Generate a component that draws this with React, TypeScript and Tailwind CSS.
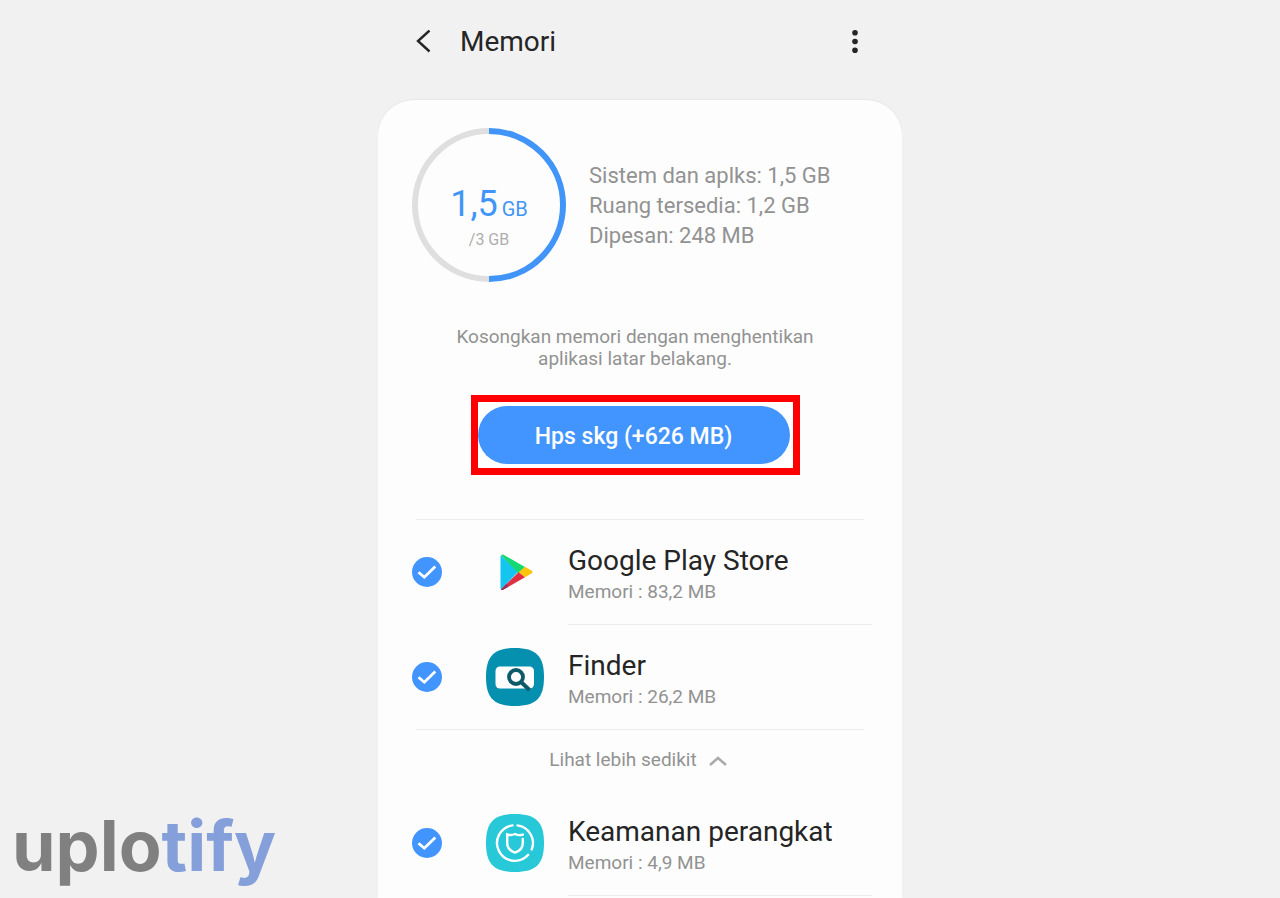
import { useState } from "react";
import type { ReactNode } from "react";

type AppInfo = {
  id: string;
  name: string;
  memory: string;
  icon: ReactNode;
};

const PlayStoreIcon = () => (
  <svg viewBox="0 0 58 58" className="size-full" aria-hidden="true">
    <path d="M15 12.5 L32 29 L15 46.5 Q14.5 46 14.5 45 V13.5 Q14.5 12.8 15 12.5Z" fill="#14c5f0" />
    <path d="M15 12.3 Q16.2 11 18 12 L39 24 L32.5 30.5Z" fill="#14d873" />
    <path d="M39 23.8 L45.5 27.6 Q47.6 29 45.5 30.4 L39 34.3 L32.5 29.2Z" fill="#fcc50e" />
    <path d="M32.5 29.2 L39 34.3 L18 46.3 Q16 47.5 15 46.4Z" fill="#e02f43" />
    <path d="M15 46.4 L20.5 40.5 L22.5 43.7 L18 46.3 Q16 47.5 15 46.4Z" fill="#9c3159" />
  </svg>
);

// rounded square shared by the Samsung app icons
const SQUIRCLE =
  "M29 0 C50 0 58 8 58 29 C58 50 50 58 29 58 C8 58 0 50 0 29 C0 8 8 0 29 0Z";

const FinderIcon = () => (
  <svg viewBox="0 0 58 58" className="size-full" aria-hidden="true">
    <path d={SQUIRCLE} fill="#0590b0" />
    <rect x="9.5" y="18.5" width="38.5" height="22" rx="4.5" fill="#fff" />
    <circle cx="30" cy="29" r="7" fill="none" stroke="#0d5b68" strokeWidth="3.8" />
    <path d="M35 34 L43.5 42" stroke="#0d5b68" strokeWidth="4" />
  </svg>
);

const SecurityIcon = () => (
  <svg viewBox="0 0 58 58" className="size-full" aria-hidden="true">
    <path d={SQUIRCLE} fill="#27c8d8" />
    <g fill="none" stroke="#fff" strokeWidth="2.4" strokeLinecap="round">
      <path d="M31.5 11.4 A17.8 17.8 0 0 1 45.7 35.5" />
      <path d="M42.2 40.8 A17.8 17.8 0 1 1 26.5 11.4" />
      <path d="M36.8 25 V29 Q36.8 36 29 38.6 Q21.2 36 21.2 29 V20.5 Q25 21.8 29 20 Q32.5 21.8 36.8 20.6" />
    </g>
  </svg>
);

const topApps: AppInfo[] = [
  { id: "play-store", name: "Google Play Store", memory: "83,2 MB", icon: <PlayStoreIcon /> },
  { id: "finder", name: "Finder", memory: "26,2 MB", icon: <FinderIcon /> },
];

const moreApps: AppInfo[] = [
  { id: "security", name: "Keamanan perangkat", memory: "4,9 MB", icon: <SecurityIcon /> },
];

const AppRow = ({ app, divider }: { app: AppInfo; divider?: boolean }) => (
  <li>
    <div className="flex h-[104px] items-center">
      <div className="relative mr-11 size-[30px] shrink-0">
        <input
          id={app.id}
          type="checkbox"
          defaultChecked
          className="peer block size-full appearance-none rounded-full border border-gray-300 checked:border-0 checked:bg-[#4295ff]"
        />
        <svg
          viewBox="0 0 30 30"
          className="pointer-events-none absolute inset-0 hidden peer-checked:block"
          fill="none"
          stroke="#fff"
          strokeWidth="2.8"
          aria-hidden="true"
        >
          <path d="M6.5 15.2 L12.3 20.2 L23.3 9.4" />
        </svg>
      </div>
      <span className="mr-6 size-[58px] shrink-0">{app.icon}</span>
      <label htmlFor={app.id} className="flex flex-1 flex-col pt-1">
        <span className="text-[28px] leading-9 text-[#252525]">{app.name}</span>
        <span className="text-[19px] leading-[26px] text-[#929292]">Memori : {app.memory}</span>
      </label>
    </div>
    {divider && <hr className="-mr-2 ml-[156px] border-[#ececec]" />}
  </li>
);

const MemoryRing = () => (
  <div className="relative size-[154px] shrink-0">
    <svg viewBox="0 0 154 154" className="size-full" fill="none" strokeWidth="6" aria-hidden="true">
      <path d="M77 151 A74 74 0 0 1 77 3" stroke="#dfdfdf" />
      <path d="M77 3 A74 74 0 0 1 77 151" stroke="#4295f8" />
    </svg>
    <div className="absolute inset-0 flex flex-col items-center justify-center pt-6">
      <p className="text-[36px] leading-10 text-[#4295f8]">
        1,5<span className="ml-1 text-[20px]">GB</span>
      </p>
      <p className="text-base leading-[22px] text-[#adadad]">/3 GB</p>
    </div>
  </div>
);

export default function App() {
  const [expanded, setExpanded] = useState(true);

  return (
    <div className="relative flex min-h-screen flex-col overflow-hidden bg-[#f1f1f1] font-[Roboto,sans-serif]">
      <div className="mx-auto flex w-full max-w-[524px] flex-1 flex-col">
        <header className="flex h-[100px] items-start px-9 pt-6">
          <button type="button" aria-label="Kembali" className="mr-7 flex h-9 w-[18px] items-center">
            <svg viewBox="0 0 18 24" className="h-6 w-[18px]" fill="none" stroke="#252525" strokeWidth="2.4">
              <path d="M15.5 0.5 L4 11 L15.5 21.5" />
            </svg>
          </button>
          <h1 className="flex-1 text-[28px] leading-9 text-[#252525]">Memori</h1>
          <button type="button" aria-label="Opsi lainnya" className="flex h-9 w-[22px] items-center justify-center">
            <svg viewBox="0 0 6 24" className="h-6 w-[6px]" fill="#252525">
              <circle cx="3" cy="2.8" r="2.8" />
              <circle cx="3" cy="11.5" r="2.8" />
              <circle cx="3" cy="20.2" r="2.8" />
            </svg>
          </button>
        </header>

        <main className="flex-1 rounded-t-[36px] bg-[#fdfdfd] pr-[38px] pl-[34px] pt-7 shadow-[0_-1px_1px_#e6e6e6]">
          <section className="flex items-center gap-[23px]">
            <MemoryRing />
            <div className="pt-0.5 text-[22px] leading-[30px] text-[#929292]">
              <p>Sistem dan aplks: 1,5 GB</p>
              <p>Ruang tersedia: 1,2 GB</p>
              <p>Dipesan: 248 MB</p>
            </div>
          </section>

          <section className="flex flex-col items-center pt-11 pr-1.5 pb-11">
            <p className="max-w-[380px] text-center text-[19px] leading-[22px] text-[#929292]">
              Kosongkan memori dengan menghentikan aplikasi latar belakang.
            </p>
            <div className="mt-[25px] w-full max-w-[329px] border-[7px] border-[#fe0000] bg-white pt-1 pr-[3px] pb-1">
              <button
                type="button"
                className="block h-[58px] w-full rounded-full bg-[#4295ff] pt-1 text-[23px] font-medium text-white"
              >
                Hps skg (+626 MB)
              </button>
            </div>
          </section>

          <hr className="ml-1 border-[#ececec]" />
          <ul>
            {topApps.map((app, i) => (
              <AppRow key={app.id} app={app} divider={i < topApps.length - 1} />
            ))}
          </ul>
          <hr className="ml-1 border-[#ececec]" />

          <button
            type="button"
            onClick={() => setExpanded(!expanded)}
            className="flex h-[61px] w-full items-center justify-center gap-3 text-[19px] text-[#929292]"
          >
            {expanded ? "Lihat lebih sedikit" : "Lihat lebih banyak"}
            <svg
              viewBox="0 0 18 10"
              className={expanded ? "h-[10px] w-[18px]" : "h-[10px] w-[18px] rotate-180"}
              fill="none"
              stroke="#ababab"
              strokeWidth="2.6"
              aria-hidden="true"
            >
              <path d="M1 9 L9 2 L17 9" />
            </svg>
          </button>

          {expanded && (
            <ul>
              {moreApps.map((app) => (
                <AppRow key={app.id} app={app} divider />
              ))}
            </ul>
          )}
        </main>
      </div>

      <div className="absolute bottom-3 left-3 font-[Inter,sans-serif] text-[70px] leading-[80px] font-bold text-[#808080]">
        uplo<span className="text-[#849fda]">tify</span>
      </div>
    </div>
  );
}
